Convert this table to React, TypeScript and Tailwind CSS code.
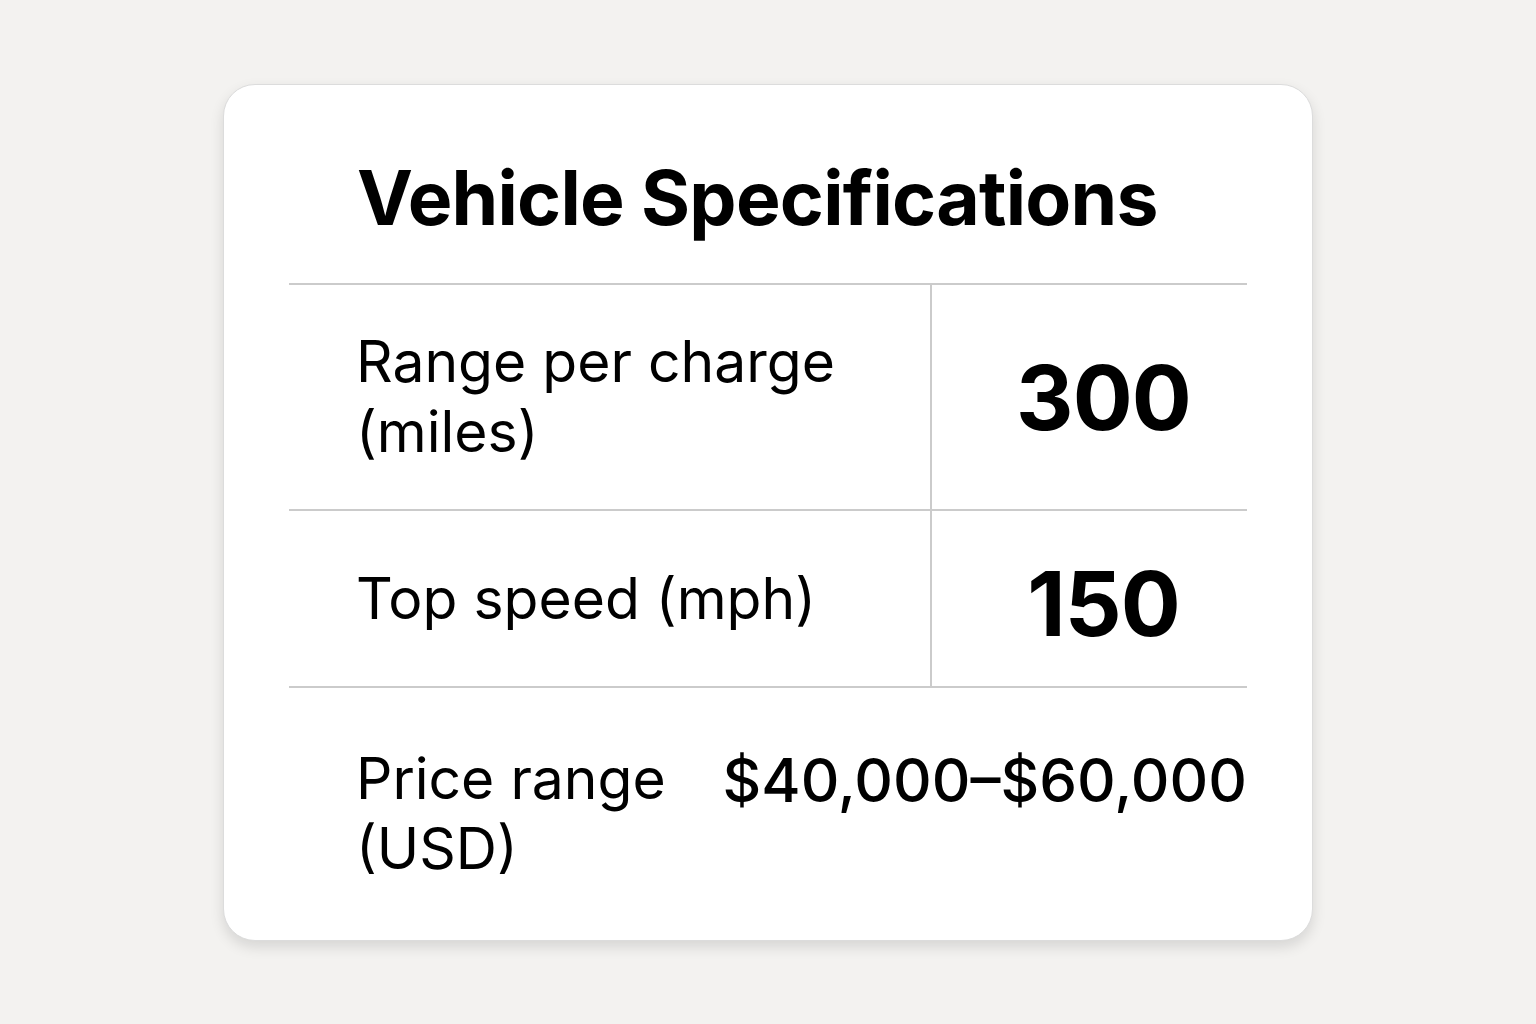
import React from 'react';

const font = { fontFamily: 'Inter, "Noto Sans", sans-serif' };

export default function App() {
  return (
    <div className="min-h-screen w-full bg-[#f3f2f0] flex items-start justify-center pt-[84px]" style={font}>
      <div className="w-[1090px] h-[857px] bg-white rounded-[32px] border border-[#dcdcdc] shadow-[0_6px_14px_rgba(0,0,0,0.12)] px-[65px] flex flex-col">
        {/* Title */}
        <div className="h-[198px] flex items-center pl-[68px] pt-[26px]">
          <h1 className="text-[75px] font-bold leading-none tracking-[-0.01em] text-black">Vehicle Specifications</h1>
        </div>

        {/* Spec table */}
        <div className="border-t-2 border-[#cbcbcb] grid grid-cols-[643px_1fr] text-black">
          <div className="h-[226px] border-b-2 border-r-2 border-[#cbcbcb] flex items-center pl-[67px]">
            <p className="text-[57px] leading-[70px] font-normal">Range per charge<br />(miles)</p>
          </div>
          <div className="h-[226px] border-b-2 border-[#cbcbcb] flex items-center justify-center pl-[28px]">
            <span className="text-[89px] font-bold leading-none tracking-[-0.01em]">300</span>
          </div>

          <div className="h-[177px] border-b-2 border-r-2 border-[#cbcbcb] flex items-center pl-[67px]">
            <p className="text-[57px] leading-[70px] font-normal">Top speed (mph)</p>
          </div>
          <div className="h-[177px] border-b-2 border-[#cbcbcb] flex items-center justify-center pl-[28px] pt-[10px]">
            <span className="text-[89px] font-bold leading-none tracking-[-0.01em]">150</span>
          </div>
        </div>

        <div className="flex-1 flex items-center justify-between pl-[67px]">
          <p className="text-[57px] leading-[70px] font-normal">Price range<br />(USD)</p>
          <span className="self-center -mt-[68px] text-[60px] font-medium leading-[70px]">$40,000–$60,000</span>
        </div>
      </div>
    </div>
  );
}
